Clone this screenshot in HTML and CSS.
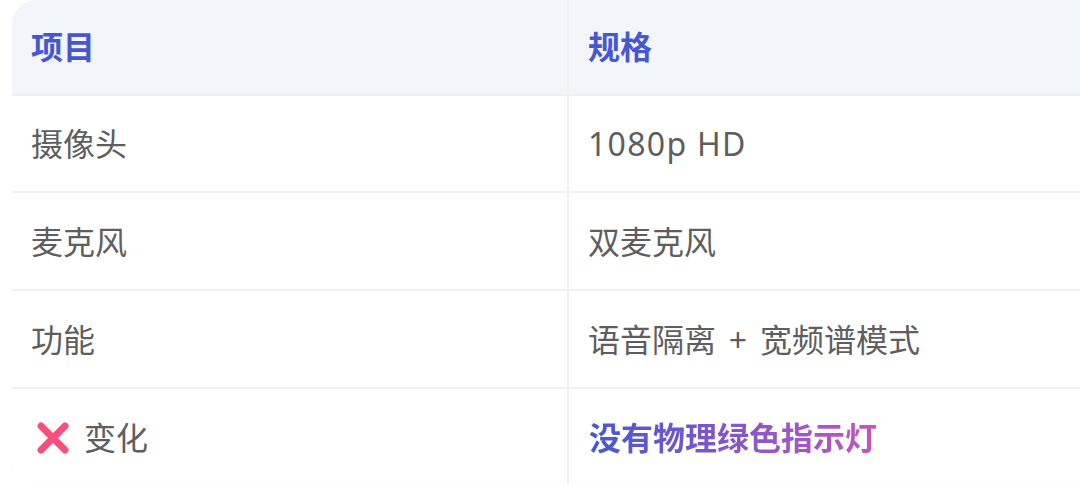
FILE: index.html
```html
<!DOCTYPE html>
<html lang="zh-CN">
<head>
<meta charset="utf-8">
<title>规格</title>
<link rel="stylesheet" href="styles.css">
</head>
<body>
<div class="card">
  <div class="row head">
    <div class="cell">项目</div>
    <div class="cell">规格</div>
  </div>
  <div class="row">
    <div class="cell">摄像头</div>
    <div class="cell"><span class="latin">1080p HD</span></div>
  </div>
  <div class="row">
    <div class="cell">麦克风</div>
    <div class="cell">双麦克风</div>
  </div>
  <div class="row">
    <div class="cell">功能</div>
    <div class="cell"><span class="spaced">语音隔离 + 宽频谱模式</span></div>
  </div>
  <div class="row last">
    <div class="cell change">
      <svg class="cross" viewBox="0 0 32 32" aria-hidden="true"><path d="M4 4 L28 28 M28 4 L4 28"/></svg>
      <span>变化</span>
    </div>
    <div class="cell"><span class="gradient">没有物理绿色指示灯</span></div>
  </div>
</div>
</body>
</html>
```
FILE: styles.css
```css
html, body {
  margin: 0;
  height: 486px;
  overflow: hidden;
  background: #ffffff;
}
.card {
  margin-left: 12px;
  height: 484px;
  overflow: hidden;
  border-radius: 24px 0 0 24px;
  box-shadow: 0 2px 8px rgba(0, 0, 0, 0.012);
  font-family: "Noto Sans", "Noto Sans CJK SC", sans-serif;
  font-size: 32px;
  color: #5e5e5e;
  background: #ffffff;
}
.row {
  display: grid;
  grid-template-columns: 555px 1fr;
  height: 95.67px;
  border-bottom: 2px solid #f0f0f2;
}
.row.head {
  height: 93.6px;
  background: #f4f5fa;
  color: #4558d0;
  font-weight: 700;
}
.row.last {
  height: 96px;
  border-bottom: 0;
}
.cell {
  display: flex;
  align-items: center;
  padding-top: 2px;
  padding-left: 19px;
  line-height: 1;
}
.head .cell {
  padding-top: 0;
}
.cell + .cell {
  border-left: 2px solid #f0f0f2;
}
.latin {
  letter-spacing: 1.3px;
}
.spaced {
  word-spacing: 4.5px;
}
.change {
  gap: 15px;
  padding-left: 25px;
}
.cross {
  width: 32px;
  height: 32px;
  fill: none;
  stroke: #f8507a;
  stroke-width: 7;
  stroke-linecap: round;
}
.gradient {
  margin-left: 1px;
  font-weight: 700;
  background: linear-gradient(90deg, #4558d0, #c455c0);
  -webkit-background-clip: text;
  background-clip: text;
  color: transparent;
}
```
